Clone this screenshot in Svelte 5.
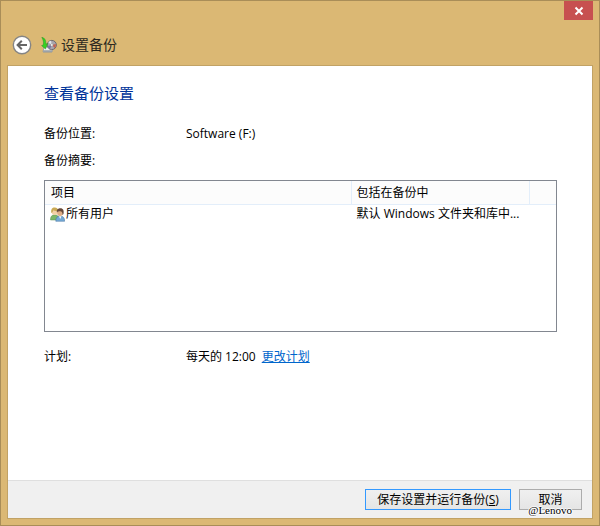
<script lang="ts">
	let location = 'Software (F:)';
	let schedule = '每天的 12:00';

	const items = [{ name: '所有用户', included: '默认 Windows 文件夹和库中...' }];
</script>

<div class="window">
	<header>
		<button class="close" aria-label="关闭">
			<svg width="10" height="10" viewBox="0 0 10 10">
				<path d="M1.5 1.5 L8.5 8.5 M8.5 1.5 L1.5 8.5" stroke="#fff" stroke-width="2" />
			</svg>
		</button>
		<div class="titleRow">
			<button class="back" aria-label="返回">
				<svg width="20" height="20" viewBox="0 0 20 20" fill="none">
					<circle cx="10" cy="10" r="8.7" fill="#fff" stroke="#858585" stroke-width="1.4" />
					<path d="M15 10 H6 M9.8 5.8 L5.6 10 L9.8 14.2" stroke="#666" stroke-width="2" />
				</svg>
			</button>
			<svg class="backupIcon" width="16" height="16" viewBox="0 0 16 16">
				<path d="M3 10 L12 10 L11 15 H2 Z" fill="#eceeef" stroke="#899096" stroke-width=".7" />
				<path d="M2.2 13.2 H11.3 L11 15.3 H2.2Z" fill="#9ba1a6" />
				<circle cx="10.8" cy="8" r="4.6" fill="#a9a5ad" stroke="#66646c" stroke-width=".9" />
				<path d="M10.8 8 L7.3 5.5 A4.2 4.2 0 0 1 10 3.8Z" fill="#dfe5ec" />
				<path d="M10.8 8 L14.8 7 A4.2 4.2 0 0 1 13.8 10.9Z" fill="#c8604e" />
				<path d="M10.8 8 L9 11.7 A4.2 4.2 0 0 1 6.8 9.1Z" fill="#7775a8" />
				<circle cx="10.8" cy="8" r="1.4" fill="#f3f3f3" stroke="#777" stroke-width=".5" />
				<path d="M.8 .3 C3.7 .8 5 3.2 4.8 7 L6.6 6.5 L4.4 12 L.6 8.6 L2.3 8 C2.8 5 2.3 3 .8 .3Z" fill="#35d321" stroke="#239425" stroke-width=".5" />
			</svg>
			<span class="title">设置备份</span>
		</div>
	</header>

	<main>
		<div class="content">
			<h1>查看备份设置</h1>

			<div class="field">
				<span class="label">备份位置:</span>
				<span>{location}</span>
			</div>
			<div class="field" id="summary">备份摘要:</div>

			<div class="list">
				<table aria-labelledby="summary">
					<thead>
						<tr>
							<th class="item">项目</th>
							<th class="included">包括在备份中</th>
							<th></th>
						</tr>
					</thead>
					<tbody>
						{#each items as item}
							<tr>
								<td>
									<div class="user">
										<svg width="15" height="15" viewBox="0 0 15 15">
											<path d="M.5 13 C.3 9.5 2 7.8 4.8 7.8 C7.5 7.8 9 9.5 8.8 13Z" fill="#7cb768" stroke="#5b8c55" stroke-width=".5" />
											<circle cx="4.7" cy="5" r="3" fill="#f3d1a8" />
											<path d="M1.4 6 C.6 2.3 2.2 .5 4.6 .5 C7 .5 8.4 2 8 4 C6 4.3 4 3.4 3.3 3.2 C3 4.5 2 6.2 1.4 6Z" fill="#c9a954" />
											<path d="M5.8 14.3 C5.6 10.8 7.3 9 10.2 9 C13 9 14.8 10.8 14.6 14.3Z" fill="#74a9d5" stroke="#416f9e" stroke-width=".5" />
											<path d="M9 9.3 L10.2 12 L11.5 9.3Z" fill="#fff" />
											<circle cx="10" cy="6" r="2.9" fill="#dfae86" />
											<path d="M7 5.6 C6.2 2.7 8 1.2 10.4 1.2 C13.2 1.2 14.2 3.6 13.5 7 L12.4 8 C12.7 5.5 11.8 4.3 10.3 4.3 C8.7 4.4 7.9 4.3 7 5.6Z" fill="#65483a" />
										</svg>
										{item.name}
									</div>
								</td>
								<td>{item.included}</td>
								<td></td>
							</tr>
						{/each}
					</tbody>
				</table>
			</div>

			<div class="field">
				<span class="label">计划:</span>
				<span>{schedule}</span>
				<a href="#schedule">更改计划</a>
			</div>
		</div>

		<footer>
			<button class="action primary">保存设置并运行备份(<u>S</u>)</button>
			<button class="action cancel">取消</button>
			<span class="watermark">@Lenovo</span>
		</footer>
	</main>
</div>

<style>
	:global(body) {
		margin: 0;
	}

	.window {
		box-sizing: border-box;
		display: flex;
		flex-direction: column;
		min-height: 100vh;
		padding: 0 6px 6px;
		border: 1px solid #a98d58;
		background: #dbb874;
		color: #000;
		font-family: 'Open Sans', 'Noto Sans CJK SC', sans-serif;
		font-size: 12px;
		line-height: 18px;
	}

	button {
		padding: 0;
		font: inherit;
		color: inherit;
	}

	svg {
		display: block;
		flex: none;
	}

	header {
		display: flex;
		flex-direction: column;
	}

	.close {
		display: flex;
		align-items: center;
		justify-content: center;
		align-self: flex-end;
		width: 29px;
		height: 19px;
		border: 0;
		background: #c75050;
	}

	.titleRow {
		display: flex;
		align-items: center;
		padding: 15px 5px 10px;
	}

	.back {
		border: 0;
		border-radius: 50%;
		background: none;
	}

	.backupIcon {
		margin: 0 4px 0 9px;
	}

	.title {
		font-size: 14px;
		line-height: 20px;
		color: #2b2820;
	}

	main {
		display: flex;
		flex: 1;
		flex-direction: column;
		border: 1px solid #c1a265;
		background: #fff;
	}

	.content {
		flex: 1;
		padding: 15px 35px 24px 36px;
	}

	h1 {
		margin: 0 0 20px;
		font-size: 15px;
		font-weight: normal;
		line-height: 24px;
		color: #003399;
	}

	.field {
		display: flex;
		margin-bottom: 9px;
	}

	.label {
		width: 142px;
	}

	a {
		margin-left: 6px;
		color: #0066cc;
	}

	.list {
		box-sizing: border-box;
		min-height: 152px;
		margin: 10px 0 16px;
		border: 1px solid #828790;
	}

	table {
		width: 100%;
		border-collapse: separate;
		border-spacing: 0;
		table-layout: fixed;
	}

	th,
	td {
		padding: 0 0 0 5px;
		font-weight: normal;
		text-align: left;
		white-space: nowrap;
	}

	th {
		box-sizing: border-box;
		height: 24px;
		border-right: 1px solid #e3eefa;
		border-bottom: 1px solid #e3eefa;
		background: #fcfcfc;
	}

	th:first-child {
		padding-left: 6px;
	}

	th:last-child {
		border-right: 0;
	}

	.item {
		width: 60%;
	}

	.included {
		width: 35%;
	}

	.user {
		display: flex;
		align-items: center;
		gap: 1px;
	}

	footer {
		position: relative;
		display: flex;
		justify-content: flex-end;
		gap: 8px;
		padding: 8px 10px;
		border-top: 1px solid #dfdfdf;
		background: #f0f0f0;
	}

	.action {
		height: 21px;
		border: 1px solid #acacac;
		background: linear-gradient(#f0f0f0, #e5e5e5);
		line-height: 18px;
	}

	.primary {
		width: 146px;
		border-color: #3399ff;
	}

	.cancel {
		width: 63px;
	}

	.watermark {
		position: absolute;
		right: 20px;
		bottom: -1px;
		font-family: 'Liberation Serif', serif;
		font-size: 11px;
		text-shadow: 1px 0 #fff, -1px 0 #fff, 0 1px #fff, 0 -1px #fff;
	}
</style>
